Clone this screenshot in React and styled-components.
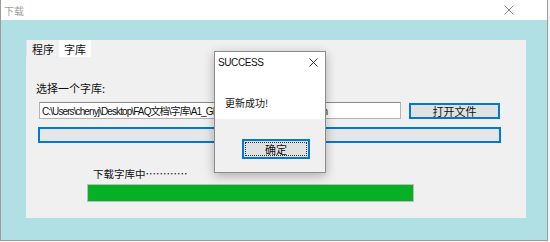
import React from "react";
import styled, { createGlobalStyle } from "styled-components";

const GlobalStyle = createGlobalStyle`
  body {
    margin: 0;
    background: #f4f4f4;
    font-family: "Noto Sans CJK SC", "Liberation Sans", sans-serif;
  }
`;

const Window = styled.div`
  position: relative;
  box-sizing: border-box;
  width: 548px;
  height: 241px;
  display: flex;
  flex-direction: column;
  border: 1px solid #9c9c9c;
  border-top: 0;
`;

const TitleBar = styled.div`
  height: 20px;
  flex: none;
  display: flex;
  align-items: center;
  justify-content: space-between;
  padding: 0 33px 0 3px;
  background: #ffffff;
`;

const Title = styled.span`
  font-size: 10px;
  color: #a0a0a0;
`;

const Body = styled.div`
  flex: 1;
  background: #b0dfe4;
  padding: 20px 20px 0 25px;
`;

const Panel = styled.div`
  width: 500px;
  height: 178px;
  background: #f0f0f0;
  display: flex;
  flex-direction: column;
`;

const TabStrip = styled.div`
  display: flex;
  height: 17px;
`;

const Tab = styled.div`
  display: flex;
  align-items: center;
  padding: 0 5px;
  font-size: 11px;
  color: #111;
  background: ${(p) => (p.$active ? "#ffffff" : "#f0f0f0")};
  border-left: ${(p) => (p.$active ? "0" : "1px solid #e2e2e2")};
`;

const Label = styled.div`
  margin: ${(p) => p.$margin};
  font-size: ${(p) => p.$size || "11px"};
  line-height: 12px;
  color: #111;
`;

const Row = styled.div`
  display: flex;
  align-items: flex-start;
  gap: 8px;
  margin: 8px 0 0 13px;
`;

const PathInput = styled.div`
  box-sizing: border-box;
  width: 362px;
  height: 17px;
  background: #fff;
  border: 1px solid #b4b4b4;
  border-top-color: #8a8a8a;
  padding: 0 2px;
  display: flex;
  align-items: center;
  overflow: hidden;
  white-space: nowrap;
  font-family: "Liberation Sans", "Noto Sans CJK SC", sans-serif;
  font-size: 10px;
  letter-spacing: -0.9px;
  color: #111;
`;

const Button = styled.button`
  box-sizing: border-box;
  width: ${(p) => p.$w};
  height: ${(p) => p.$h};
  margin-top: ${(p) => p.$top || "0"};
  padding: 0;
  background: #e1e1e1;
  border: 2px solid #0078d7;
  font-family: "Noto Sans CJK SC", sans-serif;
  font-size: 11px;
  color: #111;
  display: flex;
  align-items: center;
  justify-content: center;
  outline: ${(p) => (p.$focus ? "1px dotted #333" : "none")};
  outline-offset: -4px;
`;

const BlueBar = styled.div`
  box-sizing: border-box;
  width: 463px;
  height: 16px;
  margin: 8px 0 0 12px;
  background: #e6e6e6;
  border: 2px solid #0078d7;
`;

const Progress = styled.div`
  box-sizing: border-box;
  width: 327px;
  height: 18px;
  margin: 4px 0 0 61px;
  background: #e6e6e6;
  border: 1px solid #bcbcbc;
`;

const Fill = styled.div`
  height: 100%;
  background: #06b025;
`;

const Dialog = styled.div`
  position: absolute;
  left: 213px;
  top: 51px;
  box-sizing: border-box;
  width: 112px;
  height: 122px;
  display: flex;
  flex-direction: column;
  background: #fff;
  border: 1px solid #8c8c8c;
  box-shadow: 0 3px 10px rgba(0, 0, 0, 0.28);
`;

const DialogHead = styled.div`
  height: 21px;
  display: flex;
  align-items: center;
  justify-content: space-between;
  padding: 0 7px 0 3px;
  font-family: "Liberation Sans", sans-serif;
  font-size: 10px;
  letter-spacing: -0.4px;
  color: #111;
`;

const DialogMsg = styled.div`
  flex: 1;
  padding: 22px 0 0 10px;
  font-size: 10px;
  color: #111;
`;

const DialogFoot = styled.div`
  height: 53px;
  background: #f0f0f0;
  padding: 20px 0 0 27px;
  box-sizing: border-box;
`;

const Cross = ({ size, color }) => (
  <svg width={size} height={size} viewBox="0 0 10 10">
    <path d="M0.5 0.5 L9.5 9.5 M9.5 0.5 L0.5 9.5" stroke={color} strokeWidth="1" />
  </svg>
);

export default function App() {
  return (
    <>
      <GlobalStyle />
      <Window>
        <TitleBar>
          <Title>下载</Title>
          <Cross size={10} color="#8a8a8a" />
        </TitleBar>
        <Body>
          <Panel>
            <TabStrip>
              <Tab>程序</Tab>
              <Tab $active>字库</Tab>
            </TabStrip>
            <Label $margin="25px 0 0 10px">选择一个字库:</Label>
            <Row>
              <PathInput>{"C:\\Users\\chenyj\\Desktop\\FAQ文档\\字库\\A1_GB2312_HZK_FONT_16x16.bin"}</PathInput>
              <Button $w="91px" $h="16px" $top="1px">打开文件</Button>
            </Row>
            <BlueBar />
            <Label $margin="25px 0 0 67px" $size="10.5px">下载字库中…………</Label>
            <Progress>
              <Fill style={{ width: "100%" }} />
            </Progress>
          </Panel>
        </Body>
        <Dialog>
          <DialogHead>
            <span>SUCCESS</span>
            <Cross size={9} color="#222" />
          </DialogHead>
          <DialogMsg>更新成功!</DialogMsg>
          <DialogFoot>
            <Button $w="68px" $h="20px" $focus>确定</Button>
          </DialogFoot>
        </Dialog>
      </Window>
    </>
  );
}
